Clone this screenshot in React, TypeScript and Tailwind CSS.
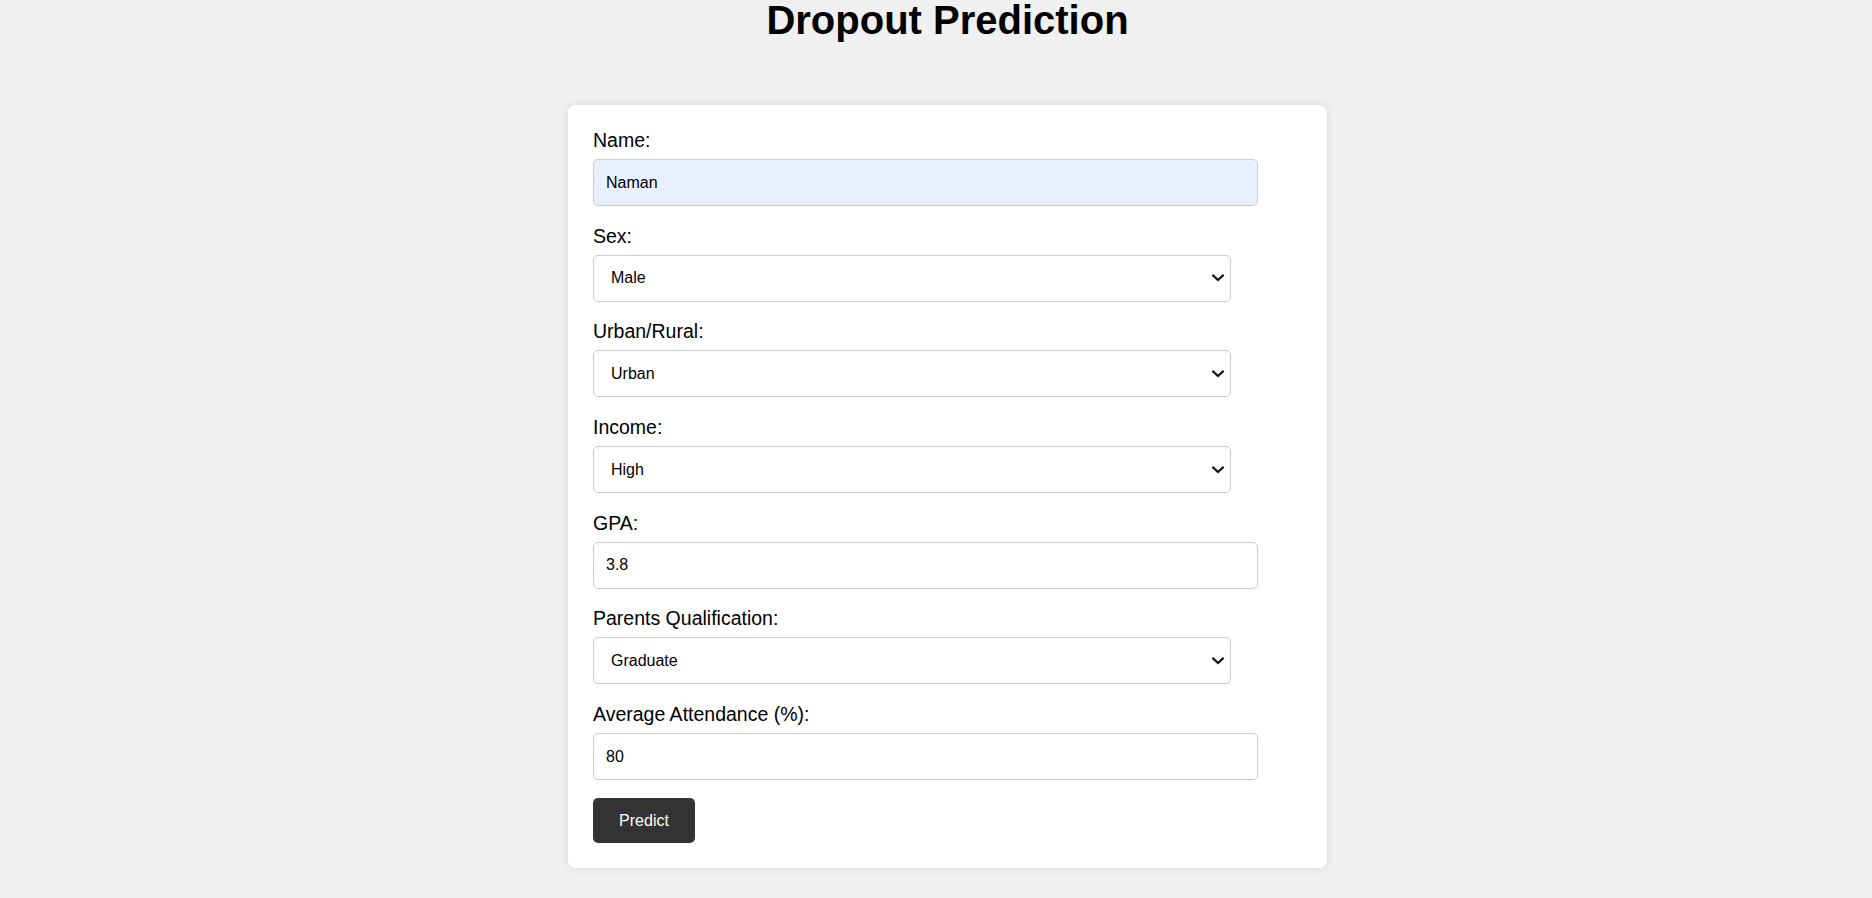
import React from "react";

const Chevron = () => (
  <svg
    className="pointer-events-none absolute right-[7px] top-1/2 -translate-y-1/2"
    width="12"
    height="8"
    viewBox="0 0 12 8"
    fill="none"
  >
    <path d="M1.2 1.5 L6 6 L10.8 1.5" stroke="#111" strokeWidth="2.2" strokeLinecap="square" />
  </svg>
);

function Field({
  label,
  children,
  last,
}: {
  label: string;
  children: React.ReactNode;
  last?: boolean;
}) {
  return (
    <div className={last ? "flex flex-col mb-[18px]" : "flex flex-col mb-[19.7px]"}>
      <label className="block text-[19.5px] leading-[21px] text-black mb-[8px]">{label}</label>
      {children}
    </div>
  );
}

function TextInput({ value, autofill }: { value: string; autofill?: boolean }) {
  return (
    <input
      type="text"
      defaultValue={value}
      className={
        "block w-[665px] h-[47px] rounded-[5px] border border-[#cccccc] pl-[12px] text-[16px] text-black outline-none " +
        (autofill ? "bg-[#e8f0fe]" : "bg-white")
      }
    />
  );
}

function Select({ value, options }: { value: string; options: string[] }) {
  return (
    <div className="relative w-[638px] h-[47px]">
      <select
        defaultValue={value}
        className="block appearance-none w-[638px] h-[47px] rounded-[5px] border border-[#cccccc] bg-white pl-[17px] text-[16px] text-black outline-none"
      >
        {options.map((o) => (
          <option key={o}>{o}</option>
        ))}
      </select>
      <Chevron />
    </div>
  );
}

export default function App() {
  return (
    <div
      className="min-h-screen bg-[#f0f0f0] flex flex-col items-center pl-[23px]"
      style={{ fontFamily: '"Liberation Sans", Arial, sans-serif' }}
    >
      <h1 className="m-0 text-[40px] leading-[40px] font-bold text-black">Dropout Prediction</h1>
      <div className="mt-[65px] w-[759px] bg-white rounded-[8px] shadow-[0_0_10px_rgba(0,0,0,0.1)] pt-[25px] px-[25px] pb-[25px]">
        <Field label="Name:">
          <TextInput value="Naman" autofill />
        </Field>
        <Field label="Sex:">
          <Select value="Male" options={["Male", "Female"]} />
        </Field>
        <Field label="Urban/Rural:">
          <Select value="Urban" options={["Urban", "Rural"]} />
        </Field>
        <Field label="Income:">
          <Select value="High" options={["Low", "Medium", "High"]} />
        </Field>
        <Field label="GPA:">
          <TextInput value="3.8" />
        </Field>
        <Field label="Parents Qualification:">
          <Select value="Graduate" options={["Non-Graduate", "Graduate", "Post-Graduate"]} />
        </Field>
        <Field label="Average Attendance (%):" last>
          <TextInput value="80" />
        </Field>
        <button className="block w-[102px] h-[45px] rounded-[5px] bg-[#333333] text-white text-[16px]">
          Predict
        </button>
      </div>
    </div>
  );
}
